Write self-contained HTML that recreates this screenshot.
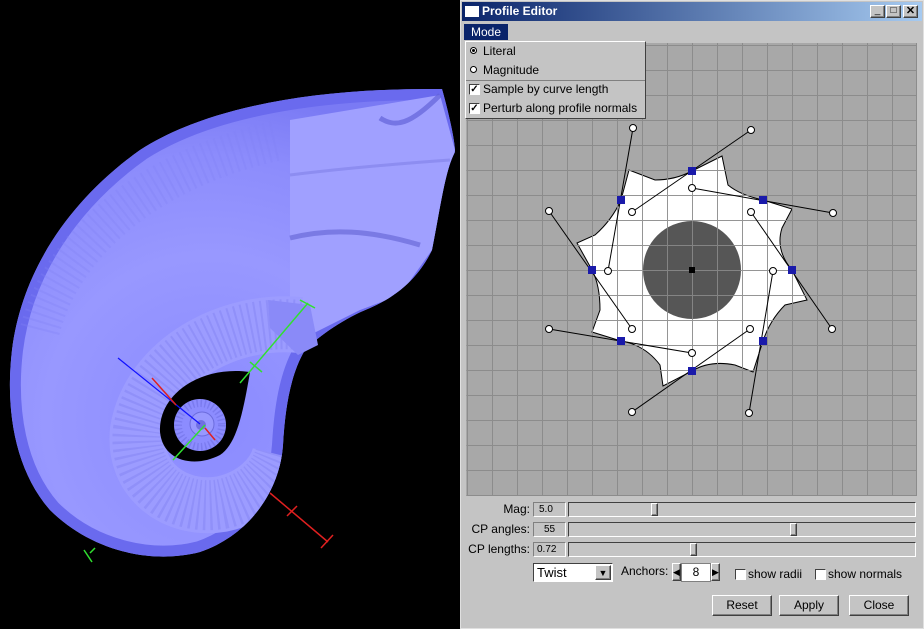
<!DOCTYPE html>
<html><head><meta charset="utf-8"><style>
*{margin:0;padding:0;box-sizing:border-box}
body{width:924px;height:629px;background:#000;position:relative;overflow:hidden;font-family:"Liberation Sans",sans-serif;font-size:12px;color:#000}
.a{position:absolute}
.t{position:absolute;white-space:nowrap}
.sunk{position:absolute;background:#c4c4c4;border:1px solid;border-color:#808080 #fff #fff #808080}
.btn{position:absolute;background:#c4c4c4;border:1px solid;border-color:#fff #404040 #404040 #fff;box-shadow:inset -1px -1px 0 #808080;text-align:center;line-height:19px;font-size:12px}
.cb{position:absolute;width:11px;height:11px;background:#fff;border:1px solid;border-color:#404040 #fff #fff #404040}
</style></head><body>
<svg class="a" style="left:0;top:0" width="924" height="629" viewBox="0 0 924 629">
<defs>
<radialGradient id="sh" cx="210" cy="420" r="330" gradientUnits="userSpaceOnUse">
<stop offset="0" stop-color="#8a8aff"/><stop offset="0.5" stop-color="#9898ff"/><stop offset="0.8" stop-color="#8c8cfc"/><stop offset="1" stop-color="#7a7af4"/></radialGradient>
<linearGradient id="tb" x1="0" x2="1"><stop offset="0" stop-color="#0a246a"/><stop offset="1" stop-color="#a6caf0"/></linearGradient>
<clipPath id="cl"><path d="M442,89 C448,110 455,140 455,152 C445,170 440,210 432,250 C420,275 400,295 370,308 C345,318 320,335 305,350 C290,375 285,410 283,445 C280,490 250,535 200,552 C150,565 90,550 50,510 C15,470 5,410 12,350 C22,270 70,200 140,150 C210,105 320,88 442,89 Z"/></clipPath>
</defs>
<g clip-path="url(#cl)">
<rect x="0" y="80" width="460" height="500" fill="url(#sh)"/>
<path d="M442,89 C448,110 455,140 455,152 C445,170 440,210 432,250 C420,275 400,295 370,308 C345,318 320,335 305,350 C290,375 285,410 283,445 C280,490 250,535 200,552 C150,565 90,550 50,510 C15,470 5,410 12,350 C22,270 70,200 140,150 C210,105 320,88 442,89 Z" fill="none" stroke="#6a6aee" stroke-width="22"/>
<path d="M40,330 C60,250 140,170 280,140" fill="none" stroke="#8080f4" stroke-width="40" stroke-dasharray="2 5" opacity="0.3"/>
<path d="M290,120 L440,95 L455,150 L432,250 L400,295 L360,310 L300,340 L290,300 Z" fill="#a0a0ff"/>
<path d="M380,118 C395,128 410,125 440,95" stroke="#6262d8" stroke-width="5" fill="none" opacity="0.7"/>
<path d="M290,238 C330,228 370,230 420,245" stroke="#6a6ad8" stroke-width="5" fill="none" opacity="0.7"/>
<path d="M290,175 C330,170 380,165 450,160" stroke="#7a7ae4" stroke-width="3" fill="none" opacity="0.5"/>
<path d="M300,325 C230,318 150,360 138,430 C132,480 175,512 222,504 C255,497 275,475 280,455" fill="none" stroke="#9c9cff" stroke-width="56"/>
<path d="M300,325 C230,318 150,360 138,430 C132,480 175,512 222,504 C255,497 275,475 280,455" fill="none" stroke="#7c7cee" stroke-width="50" stroke-dasharray="2 4" opacity="0.35"/>
</g>
<path d="M268,300 L310,305 L318,345 L298,355 L270,328 Z" fill="#8a8af8"/>
<path d="M250,372 C200,365 158,395 160,432 C163,462 195,468 220,455 C235,445 242,420 250,372 Z" fill="#000"/>
<circle cx="200" cy="425" r="26" fill="#8c8cff"/>
<circle cx="200" cy="425" r="22" fill="none" stroke="#7070e4" stroke-width="8" stroke-dasharray="1.5 2.5" opacity="0.6"/>
<circle cx="202" cy="424" r="12" fill="#9898ff" stroke="#6c6cdd"/>
<circle cx="201" cy="425" r="5" fill="#7070e0"/>
<line x1="118" y1="358" x2="200" y2="424" stroke="#1010ff" stroke-width="1.2"/>
<line x1="152" y1="378" x2="176" y2="405" stroke="#e02020" stroke-width="1.5"/>
<line x1="205" y1="428" x2="215" y2="440" stroke="#e02020" stroke-width="1.5"/>
<line x1="270" y1="493" x2="328" y2="542" stroke="#e02020" stroke-width="1.5"/>
<line x1="321" y1="548" x2="333" y2="535" stroke="#e02020" stroke-width="1.5"/>
<line x1="287" y1="516" x2="297" y2="506" stroke="#e02020" stroke-width="1.5"/>
<line x1="308" y1="303" x2="240" y2="383" stroke="#30e030" stroke-width="1.5"/>
<line x1="205" y1="425" x2="173" y2="460" stroke="#30e030" stroke-width="1.5"/>
<line x1="300" y1="300" x2="315" y2="308" stroke="#30e030" stroke-width="1.5"/>
<line x1="250" y1="362" x2="262" y2="372" stroke="#30e030" stroke-width="1.5"/>
<line x1="90" y1="553" x2="95" y2="548" stroke="#30e030" stroke-width="1.5"/>
<line x1="84" y1="550" x2="92" y2="562" stroke="#30e030" stroke-width="1.5"/>
<rect x="460" y="0" width="464" height="629" fill="#c4c4c4"/>
<rect x="460.5" y="0.5" width="463" height="628" fill="none" stroke="#e0e0e0"/>
<rect x="462" y="2" width="460" height="19" fill="url(#tb)"/>
<rect x="465" y="6" width="14" height="11" fill="#fff"/>
<rect x="466" y="43" width="451" height="453" fill="#a8a8a8"/>
<path d="M692,171 L722,156 L728,185 Q740,195 763,200 L792,209 L782,228 Q775,250 792,270 L807,300 L785,305 Q770,320 763,341 L753,372 L735,365 Q710,360 692,371 L663,386 L660,365 Q645,345 621,341 L592,332 L600,310 Q600,285 592,270 L577,243 L595,235 Q612,220 621,200 L629,170 L655,180 Q675,180 692,171 Z" fill="#fff" stroke="#000"/>
<circle cx="692" cy="270" r="49" fill="#565656"/>
<g stroke="#8a8a8a" stroke-width="1" opacity="0.9">
<path d="M466.5,45.5H917M466.5,70.5H917M466.5,95.5H917M466.5,120.5H917M466.5,145.5H917M466.5,170.5H917M466.5,195.5H917M466.5,220.5H917M466.5,245.5H917M466.5,270.5H917M466.5,295.5H917M466.5,320.5H917M466.5,345.5H917M466.5,370.5H917M466.5,395.5H917M466.5,420.5H917M466.5,445.5H917M466.5,470.5H917M466.5,495.5H917"/>
<path d="M467.5,43V496M492.5,43V496M517.5,43V496M542.5,43V496M567.5,43V496M592.5,43V496M617.5,43V496M642.5,43V496M667.5,43V496M692.5,43V496M717.5,43V496M742.5,43V496M767.5,43V496M792.5,43V496M817.5,43V496M842.5,43V496M867.5,43V496M892.5,43V496M916.5,43V496"/>
</g>
<g stroke="#000" stroke-width="1" fill="none">
<line x1="633" y1="128" x2="608" y2="271"/>
<line x1="751" y1="130" x2="632" y2="212"/>
<line x1="692" y1="188" x2="833" y2="213"/>
<line x1="751" y1="212" x2="832" y2="329"/>
<line x1="773" y1="271" x2="749" y2="413"/>
<line x1="750" y1="329" x2="632" y2="412"/>
<line x1="549" y1="329" x2="692" y2="353"/>
<line x1="549" y1="211" x2="632" y2="329"/>
</g>
<g fill="#fff" stroke="#000">
<circle cx="633" cy="128" r="3.5"/><circle cx="608" cy="271" r="3.5"/><circle cx="751" cy="130" r="3.5"/><circle cx="632" cy="212" r="3.5"/>
<circle cx="692" cy="188" r="3.5"/><circle cx="833" cy="213" r="3.5"/><circle cx="751" cy="212" r="3.5"/><circle cx="832" cy="329" r="3.5"/>
<circle cx="773" cy="271" r="3.5"/><circle cx="749" cy="413" r="3.5"/><circle cx="750" cy="329" r="3.5"/><circle cx="632" cy="412" r="3.5"/>
<circle cx="549" cy="329" r="3.5"/><circle cx="692" cy="353" r="3.5"/><circle cx="549" cy="211" r="3.5"/><circle cx="632" cy="329" r="3.5"/>
</g>
<g fill="#1a1aaa">
<rect x="688" y="167" width="8" height="8"/><rect x="759" y="196" width="8" height="8"/><rect x="788" y="266" width="8" height="8"/><rect x="759" y="337" width="8" height="8"/>
<rect x="688" y="367" width="8" height="8"/><rect x="617" y="337" width="8" height="8"/><rect x="588" y="266" width="8" height="8"/><rect x="617" y="196" width="8" height="8"/>
</g>
<rect x="689" y="267" width="6" height="6" fill="#000"/>
</svg>
<div class="t" style="left:482px;top:4px;color:#fff;font-weight:bold;font-size:12px">Profile Editor</div>
<div class="btn" style="left:870px;top:5px;width:15px;height:13px;line-height:10px;font-size:10px">_</div>
<div class="btn" style="left:886px;top:5px;width:15px;height:13px;line-height:10px;font-size:10px">□</div>
<div class="btn" style="left:903px;top:5px;width:15px;height:13px;line-height:11px;font-size:11px;font-weight:bold">✕</div>
<div class="a" style="left:464px;top:24px;width:44px;height:16px;background:#0a246a;color:#fff;line-height:16px;padding-left:7px">Mode</div>
<div class="a" style="left:465px;top:41px;width:181px;height:78px;background:#c4c4c4;border:1px solid;border-color:#fff #404040 #404040 #fff"></div>
<div class="a" style="left:466px;top:80px;width:179px;height:1px;background:#808080"></div>
<div class="a" style="left:470px;top:47px;width:7px;height:7px;border-radius:50%;background:#fff;border:1px solid #000"><div class="a" style="left:1px;top:1px;width:3px;height:3px;background:#000;border-radius:50%"></div></div>
<div class="t" style="left:483px;top:44px">Literal</div>
<div class="a" style="left:470px;top:66px;width:7px;height:7px;border-radius:50%;background:#fff;border:1px solid #000"></div>
<div class="t" style="left:483px;top:63px">Magnitude</div>
<div class="cb" style="left:469px;top:84px;font-size:10px;line-height:9px;text-align:center;font-weight:bold">✓</div>
<div class="t" style="left:483px;top:82px">Sample by curve length</div>
<div class="cb" style="left:469px;top:103px;font-size:10px;line-height:9px;text-align:center;font-weight:bold">✓</div>
<div class="t" style="left:483px;top:101px">Perturb along profile normals</div>
<div class="t" style="left:500px;top:502px;width:30px;text-align:right">Mag:</div>
<div class="t" style="left:462px;top:522px;width:68px;text-align:right">CP angles:</div>
<div class="t" style="left:462px;top:542px;width:68px;text-align:right">CP lengths:</div>
<div class="sunk" style="left:533px;top:502px;width:33px;height:15px;font-size:10px;line-height:13px;padding-left:5px">5.0</div>
<div class="sunk" style="left:533px;top:522px;width:33px;height:15px;font-size:10px;line-height:13px;padding-left:10px">55</div>
<div class="sunk" style="left:533px;top:542px;width:33px;height:15px;font-size:10px;line-height:13px;padding-left:3px">0.72</div>
<div class="sunk" style="left:568px;top:502px;width:348px;height:15px;border-color:#404040 #fff #fff #404040"></div>
<div class="sunk" style="left:568px;top:522px;width:348px;height:15px;border-color:#404040 #fff #fff #404040"></div>
<div class="sunk" style="left:568px;top:542px;width:348px;height:15px;border-color:#404040 #fff #fff #404040"></div>
<div class="btn" style="left:651px;top:503px;width:7px;height:13px"></div>
<div class="btn" style="left:790px;top:523px;width:7px;height:13px"></div>
<div class="btn" style="left:690px;top:543px;width:7px;height:13px"></div>
<div class="a" style="left:533px;top:563px;width:80px;height:19px;background:#fff;border:1px solid;border-color:#404040 #fff #fff #404040"></div>
<div class="t" style="left:537px;top:565px;font-size:13px">Twist</div>
<div class="btn" style="left:595px;top:565px;width:16px;height:15px;line-height:14px;font-size:9px">▼</div>
<div class="t" style="left:621px;top:564px">Anchors:</div>
<div class="btn" style="left:672px;top:563px;width:9px;height:18px;line-height:16px;font-size:9px">◀</div>
<div class="a" style="left:681px;top:563px;width:30px;height:19px;background:#fff;border:1px solid #808080;text-align:center;line-height:17px">8</div>
<div class="btn" style="left:711px;top:563px;width:9px;height:18px;line-height:16px;font-size:9px">▶</div>
<div class="cb" style="left:735px;top:569px"></div>
<div class="t" style="left:748px;top:567px">show radii</div>
<div class="cb" style="left:815px;top:569px"></div>
<div class="t" style="left:828px;top:567px">show normals</div>
<div class="btn" style="left:712px;top:595px;width:60px;height:21px">Reset</div>
<div class="btn" style="left:779px;top:595px;width:60px;height:21px">Apply</div>
<div class="btn" style="left:849px;top:595px;width:60px;height:21px">Close</div>
</body></html>
